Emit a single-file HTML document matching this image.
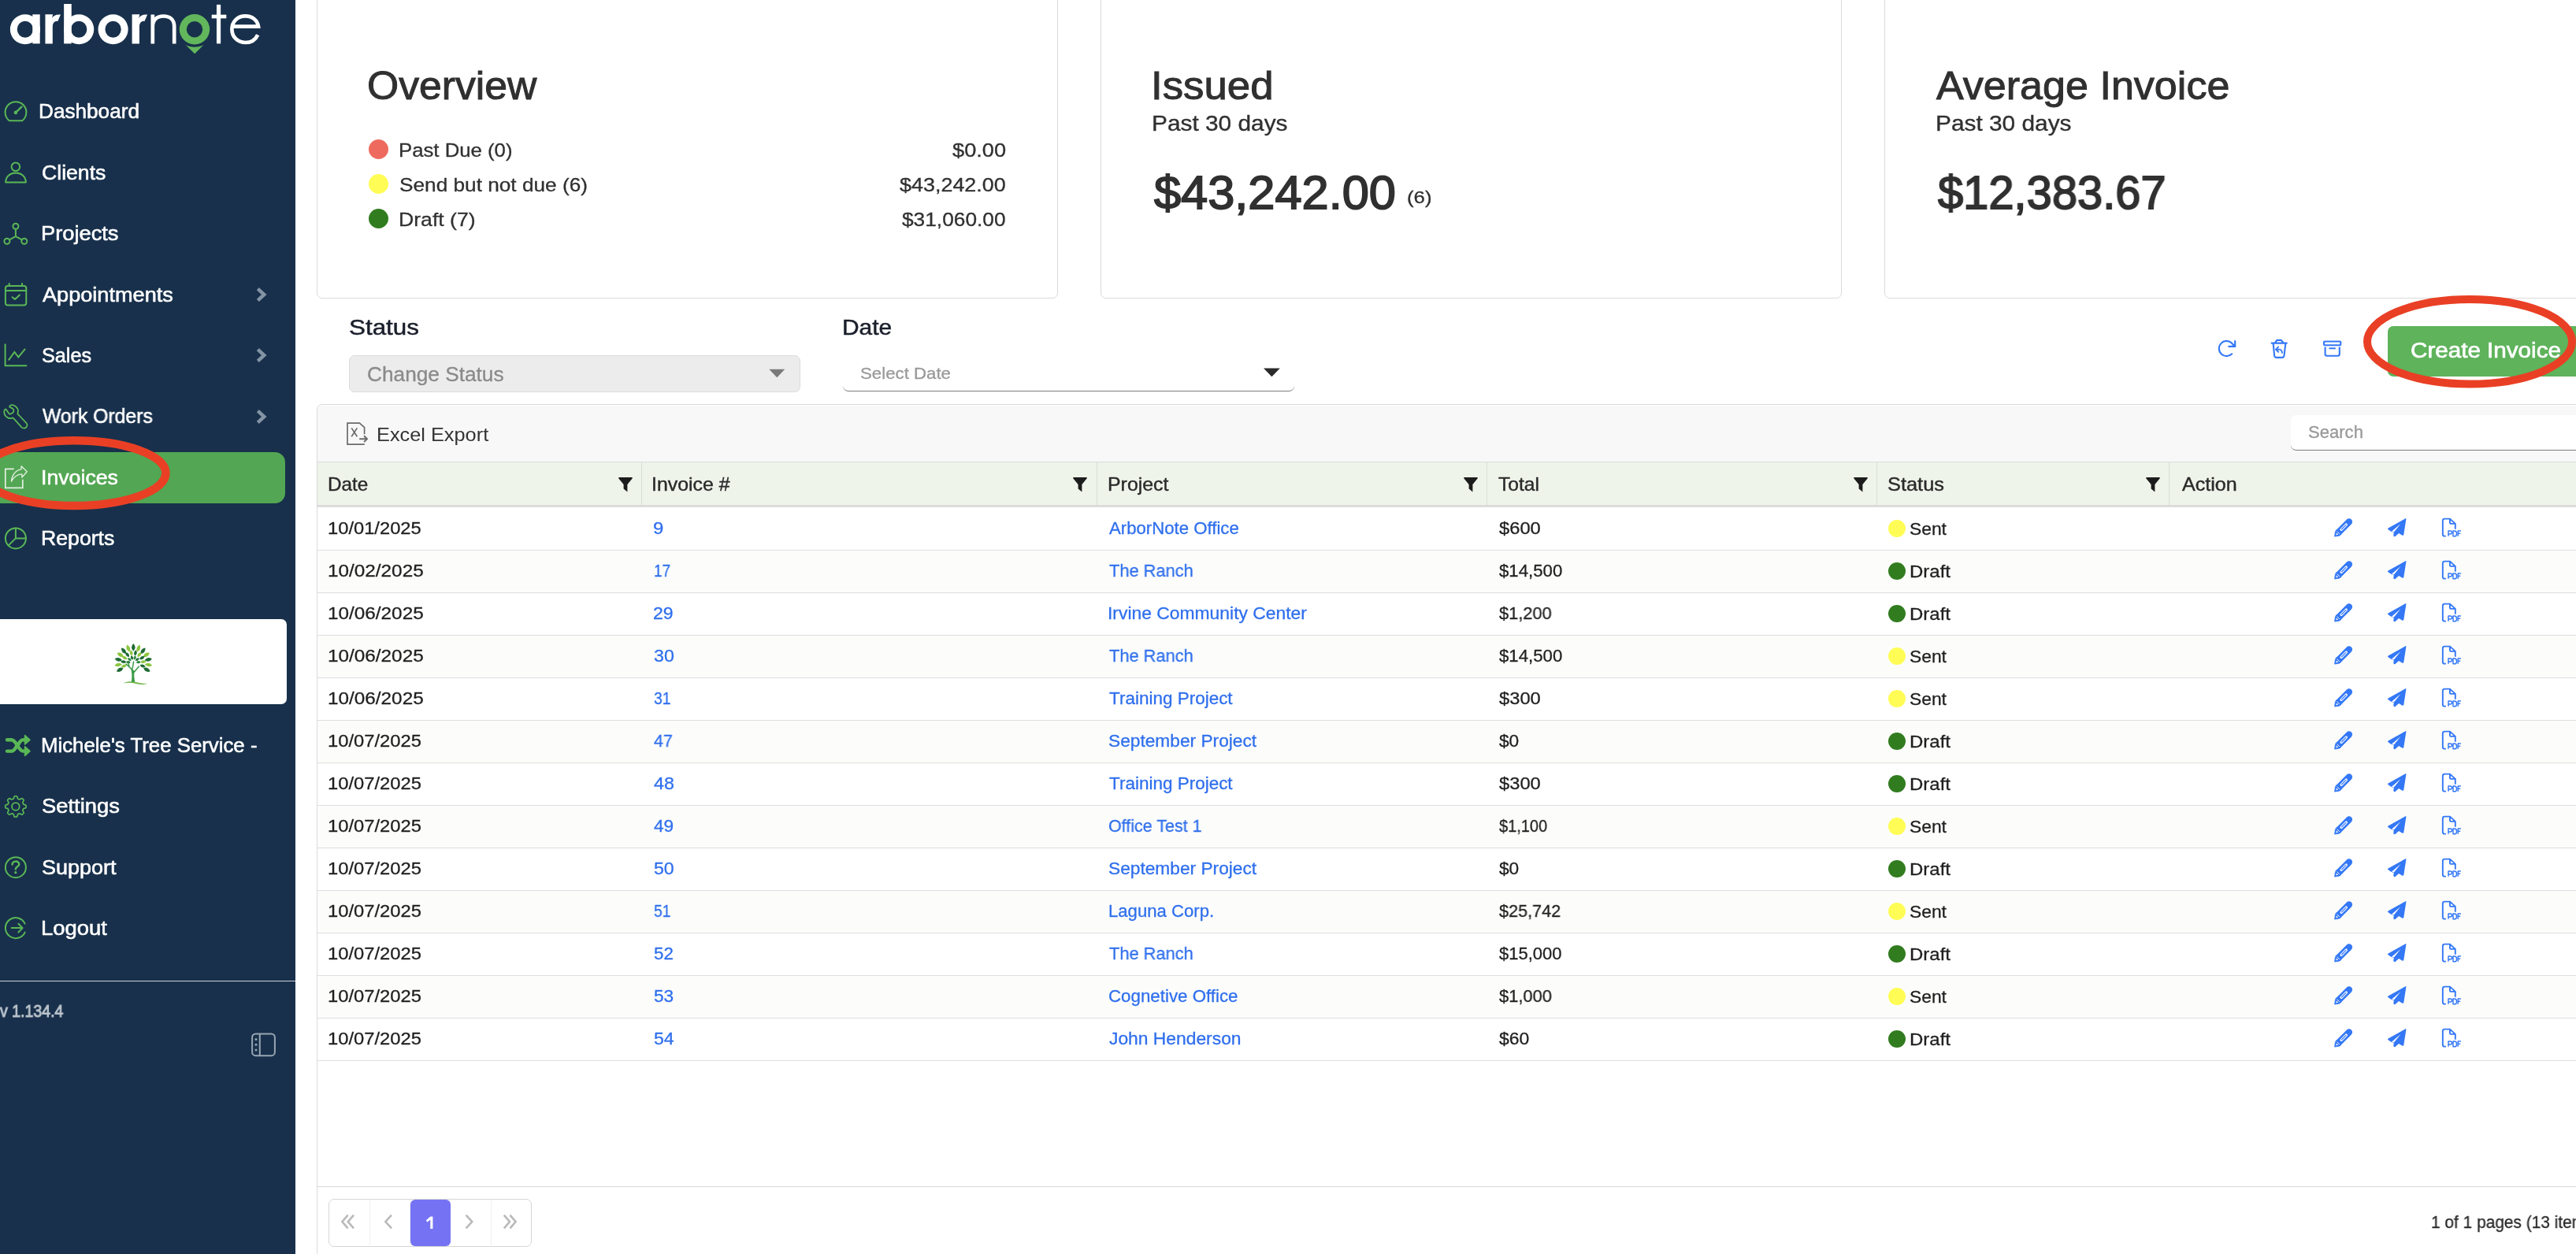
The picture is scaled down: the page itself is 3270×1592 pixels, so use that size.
<!DOCTYPE html>
<html lang="en"><head><meta charset="utf-8"><title>ArborNote - Invoices</title>
<style>
*{box-sizing:border-box}
html,body{margin:0;padding:0}
body{width:3270px;height:1592px;overflow:hidden;background:#fff;font-family:"Liberation Sans",sans-serif;position:relative}
#main,#side{position:absolute;left:0;top:0;height:1592px}
#main{width:3270px;overflow:hidden}
#side{width:375px;background:#18304b;overflow:hidden}
.t{position:absolute;will-change:transform;white-space:pre;line-height:1;transform-origin:0 0;font-family:"Liberation Sans",sans-serif}
.i{position:absolute;overflow:visible}
.dot{position:absolute;border-radius:50%}
.active{position:absolute;left:-14px;top:574px;width:376px;height:65px;border-radius:13px;background:#53a653}
.cobox{position:absolute;left:-10px;top:785.6px;width:374px;height:108.5px;border-radius:7px;background:#fff}
.sdiv{position:absolute;left:0;top:1245px;width:375px;height:1.4px;background:#cdd3da}
.card{position:absolute;top:-20px;width:941px;height:398.5px;border:1.3px solid #dadada;border-radius:7px;background:#fff}
.sel{position:absolute;left:443px;top:451px;width:573px;height:46.6px;background:#ececec;border:1.3px solid #dcdcdc;border-radius:7px}
.datesel{position:absolute;left:1070.2px;top:451px;width:572.6px;height:46px;border-bottom:1.6px solid #7d7d7d;border-radius:7px}
.btn{position:absolute;left:3031px;top:414.2px;width:300px;height:63.4px;border-radius:7px;background:#5eb35b}
.grid{position:absolute;left:402px;top:513.2px;width:2950px;height:1100px;border:1.3px solid #dadada;border-radius:7px;background:#fff}
.toolbar{position:absolute;left:403.3px;top:514.5px;width:2900px;height:72px;background:#f8f8f8;border-bottom:1.3px solid #dcdcdc;border-radius:6px 0 0 0}
.search{position:absolute;left:2908px;top:527px;width:420px;height:45.4px;background:#fff;border-radius:7px;border-bottom:1.6px solid #7d7d7d}
.ghead{position:absolute;left:403.3px;top:586.5px;width:2900px;height:57.8px;background:#eff4ea;border-bottom:3.5px solid #dcdcdc}
.hsep{position:absolute;top:586.5px;width:1.3px;height:54.3px;background:#dadfd5}
.row{position:absolute;left:403.3px;width:2900px;height:54px;border-bottom:1.3px solid #dedede;background:#fff}
.row.alt{background:#fcfdfb}
.gfoot{position:absolute;left:403.3px;top:1505.6px;width:2900px;height:1.3px;background:#d9d9d9}
.pager{position:absolute;left:417.2px;top:1522.2px;width:257.6px;height:60.6px;border:1.3px solid #d6d6d6;border-radius:7px;background:#fff}
.pager i{position:absolute;top:0;width:1px;height:58px;background:#f1f1f1}
.pgact{position:absolute;left:521px;top:1522.9px;width:51.2px;height:59.4px;border-radius:6px;background:#7573f3}
</style></head><body>
<div id="main">
<div class="card" style="left:402px"></div>
<div class="card" style="left:1397px"></div>
<div class="card" style="left:2392px"></div>
<div class="dot" style="left:467.8px;top:176.9px;width:25.2px;height:25.2px;background:#ef6a5e"></div>
<div class="dot" style="left:467.8px;top:221.1px;width:25.2px;height:25.2px;background:#fffd55"></div>
<div class="dot" style="left:467.8px;top:265.0px;width:25.2px;height:25.2px;background:#317c1f"></div>
<div class="sel"></div>
<svg class="i" style="left:975px;top:467px" width="23" height="14" viewBox="975 467 23 14" ><path d="M976.3 468.7H996.3L986.3 479.3Z" fill="#7a7a7a"/></svg>
<div class="datesel"></div>
<svg class="i" style="left:1603px;top:466px" width="23" height="14" viewBox="1603 466 23 14" ><path d="M1604 467.5H1624.8L1614.4 478.3Z" fill="#2a2a2a"/></svg>
<svg class="i" style="left:2814px;top:430px" width="26" height="26" viewBox="2814 430 26 26" ><path d="M2833.2 449.3A9.6 9.6 0 1 1 2832.6 435.15L2837.2 439.9M2837.2 433V439.9H2829.3" fill="none" stroke="#3478f6" stroke-width="2.2" stroke-linecap="round" stroke-linejoin="round"/></svg>
<svg class="i" style="left:2881px;top:428px" width="25" height="29" viewBox="2881 428 25 29" ><path d="M2883.6 435.6H2902.8M2888.1 435.2L2890.3 431.9H2895.9L2898.4 435.2M2885.7 436.2L2887.1 451.4Q2887.4 453.9 2889.7 453.9H2896.9Q2899.2 453.9 2899.5 451.4L2901.3 436.2" fill="none" stroke="#3478f6" stroke-width="2.1" stroke-linecap="round" stroke-linejoin="round"/><path d="M2892.2 440.4L2888.9 443.6L2892.2 446.8M2889.2 443.6H2893.4Q2896.6 443.8 2897 447.8" fill="none" stroke="#3478f6" stroke-width="1.9" stroke-linecap="round" stroke-linejoin="round"/></svg>
<svg class="i" style="left:2947px;top:430px" width="28" height="25" viewBox="2947 430 28 25" ><rect x="2950" y="433.5" width="21.3" height="4.8" rx="1" fill="none" stroke="#3478f6" stroke-width="2.1" stroke-linecap="round" stroke-linejoin="round"/><path d="M2951.6 441.2V449.5Q2951.6 451.7 2953.8 451.7H2967.6Q2969.8 451.7 2969.8 449.5V441.2M2957.4 442.3H2964" fill="none" stroke="#3478f6" stroke-width="2.1" stroke-linecap="round" stroke-linejoin="round"/></svg>
<div class="btn"></div>
<div class="grid"></div>
<div class="toolbar"></div>
<svg class="i" style="left:438px;top:534px" width="30" height="32" viewBox="438 534 30 32" ><path d="M462.6 551.2V542.6L456.4 537.1H441V564.1H462.8" fill="none" stroke="#6b6b6b" stroke-width="1.7" stroke-linejoin="miter"/><path d="M446.2 543.4L453.4 554.3M453.4 543.4L446.2 554.3" stroke="#6b6b6b" stroke-width="1.7" fill="none"/><path d="M456.2 557.2H465M462.1 553.3L466 557.2L462.1 561.1" stroke="#6b6b6b" stroke-width="2" fill="none"/></svg>
<div class="search"></div>
<div class="ghead"></div>
<div class="hsep" style="left:814.0px"></div>
<div class="hsep" style="left:1391.8px"></div>
<div class="hsep" style="left:1887.0px"></div>
<div class="hsep" style="left:2382.0px"></div>
<div class="hsep" style="left:2753.0px"></div>
<svg class="i" style="left:784px;top:604.75px" width="21" height="21" viewBox="784 604.75 21 21" ><path d="M785.8 605.75H802.2Q803.4 605.75 802.6 607.35L796.4 614.75V624.25L791.6 620.35V614.75L785.4 607.35Q784.6 605.75 785.8 605.75Z" fill="#1c1c1c"/></svg>
<svg class="i" style="left:1361.25px;top:604.75px" width="21" height="21" viewBox="1361.25 604.75 21 21" ><path d="M1363.05 605.75H1379.45Q1380.65 605.75 1379.85 607.35L1373.65 614.75V624.25L1368.85 620.35V614.75L1362.65 607.35Q1361.85 605.75 1363.05 605.75Z" fill="#1c1c1c"/></svg>
<svg class="i" style="left:1856.5px;top:604.75px" width="21" height="21" viewBox="1856.5 604.75 21 21" ><path d="M1858.3 605.75H1874.7Q1875.9 605.75 1875.1 607.35L1868.9 614.75V624.25L1864.1 620.35V614.75L1857.9 607.35Q1857.1 605.75 1858.3 605.75Z" fill="#1c1c1c"/></svg>
<svg class="i" style="left:2351.5px;top:604.75px" width="21" height="21" viewBox="2351.5 604.75 21 21" ><path d="M2353.3 605.75H2369.7Q2370.9 605.75 2370.1 607.35L2363.9 614.75V624.25L2359.1 620.35V614.75L2352.9 607.35Q2352.1 605.75 2353.3 605.75Z" fill="#1c1c1c"/></svg>
<svg class="i" style="left:2723px;top:604.75px" width="21" height="21" viewBox="2723 604.75 21 21" ><path d="M2724.8 605.75H2741.2Q2742.4 605.75 2741.6 607.35L2735.4 614.75V624.25L2730.6 620.35V614.75L2724.4 607.35Q2723.6 605.75 2724.8 605.75Z" fill="#1c1c1c"/></svg>
<div class="row" style="top:644.90px"></div>
<div class="dot" style="left:2397px;top:659.85px;width:21.8px;height:21.8px;background:#fffd55"></div>
<svg class="i" style="left:2960.8px;top:655.8px" width="28" height="28" viewBox="2960.8 655.8 28 28" ><path d="M2981.7000000000003 662.3L2969.0 675.0" stroke="#3478f6" stroke-width="8.4" stroke-linecap="round" fill="none"/><path d="M2965.5 672.5L2971.5 678.5L2969.0 680.0L2963.4 680.9L2964.2000000000003 675.1999999999999Z" fill="#3478f6" stroke="#3478f6" stroke-width="0.8" stroke-linejoin="round"/><path d="M2978.1000000000004 665.9L2971.9 672.0999999999999" stroke="#fff" stroke-width="3.3" stroke-linecap="round"/><path d="M2977.8 666.1999999999999L2972.2000000000003 671.8" stroke="#3478f6" stroke-width="1.15" stroke-linecap="round"/><path d="M2966.4 674.4L2969.7000000000003 677.6999999999999" stroke="#fff" stroke-width="0.9"/><path d="M2965.8 676.1999999999999L2968.0 678.4L2965.2000000000003 679.0999999999999Z" fill="#fff"/></svg>
<svg class="i" style="left:3028.9px;top:655.8px" width="28" height="28" viewBox="3028.9 655.8 28 28" ><path d="M3053.48 657.96Q3054.46 657.64 3054.30 658.78L3051.20 678.51Q3050.88 679.98 3049.57 679.49L3045.01 676.88L3040.44 680.79Q3038.48 681.44 3038.16 679.65L3038.65 675.74L3035.06 674.60L3031.47 671.99Q3030.49 671.01 3031.47 670.36Z" fill="#3478f6"/><path d="M3047.29 664.81L3035.87 674.43L3038.81 675.41Z" fill="#fff"/></svg>
<svg class="i" style="left:3097.8px;top:655.8px" width="30" height="28" viewBox="3097.8 655.8 30 28" ><path d="M3104.69 680.47L3103.06 680.47Q3100.62 680.47 3100.62 678.02L3100.62 660.90Q3100.62 658.45 3103.06 658.45L3109.75 658.45L3116.60 664.65L3116.60 671.50M3109.75 658.45L3109.75 663.51Q3109.75 664.65 3110.89 664.65L3116.60 664.65" fill="none" stroke="#3478f6" stroke-width="1.9" stroke-linejoin="round"/><path d="M3107.79 680.63v-6.9h2.3q2.2 0 2.2 2.05q0 2.05 -2.2 2.05h-2.3M3113.79 673.73v6.9h1.7q2.8 0 2.8 -3.45q0 -3.45 -2.8 -3.45zM3119.99 680.63v-6.9h3.7M3119.99 677.13h3" fill="none" stroke="#3478f6" stroke-width="1.45" stroke-linejoin="round"/></svg>
<div class="row alt" style="top:698.90px"></div>
<div class="dot" style="left:2397px;top:713.85px;width:21.8px;height:21.8px;background:#317c1f"></div>
<svg class="i" style="left:2960.8px;top:709.8px" width="28" height="28" viewBox="2960.8 709.8 28 28" ><path d="M2981.7000000000003 716.3L2969.0 729.0" stroke="#3478f6" stroke-width="8.4" stroke-linecap="round" fill="none"/><path d="M2965.5 726.5L2971.5 732.5L2969.0 734.0L2963.4 734.9L2964.2000000000003 729.1999999999999Z" fill="#3478f6" stroke="#3478f6" stroke-width="0.8" stroke-linejoin="round"/><path d="M2978.1000000000004 719.9L2971.9 726.0999999999999" stroke="#fff" stroke-width="3.3" stroke-linecap="round"/><path d="M2977.8 720.1999999999999L2972.2000000000003 725.8" stroke="#3478f6" stroke-width="1.15" stroke-linecap="round"/><path d="M2966.4 728.4L2969.7000000000003 731.6999999999999" stroke="#fff" stroke-width="0.9"/><path d="M2965.8 730.1999999999999L2968.0 732.4L2965.2000000000003 733.0999999999999Z" fill="#fff"/></svg>
<svg class="i" style="left:3028.9px;top:709.8px" width="28" height="28" viewBox="3028.9 709.8 28 28" ><path d="M3053.48 711.96Q3054.46 711.64 3054.30 712.78L3051.20 732.51Q3050.88 733.98 3049.57 733.49L3045.01 730.88L3040.44 734.79Q3038.48 735.44 3038.16 733.65L3038.65 729.74L3035.06 728.60L3031.47 725.99Q3030.49 725.01 3031.47 724.36Z" fill="#3478f6"/><path d="M3047.29 718.81L3035.87 728.43L3038.81 729.41Z" fill="#fff"/></svg>
<svg class="i" style="left:3097.8px;top:709.8px" width="30" height="28" viewBox="3097.8 709.8 30 28" ><path d="M3104.69 734.47L3103.06 734.47Q3100.62 734.47 3100.62 732.02L3100.62 714.90Q3100.62 712.45 3103.06 712.45L3109.75 712.45L3116.60 718.65L3116.60 725.50M3109.75 712.45L3109.75 717.51Q3109.75 718.65 3110.89 718.65L3116.60 718.65" fill="none" stroke="#3478f6" stroke-width="1.9" stroke-linejoin="round"/><path d="M3107.79 734.63v-6.9h2.3q2.2 0 2.2 2.05q0 2.05 -2.2 2.05h-2.3M3113.79 727.73v6.9h1.7q2.8 0 2.8 -3.45q0 -3.45 -2.8 -3.45zM3119.99 734.63v-6.9h3.7M3119.99 731.13h3" fill="none" stroke="#3478f6" stroke-width="1.45" stroke-linejoin="round"/></svg>
<div class="row" style="top:752.90px"></div>
<div class="dot" style="left:2397px;top:767.85px;width:21.8px;height:21.8px;background:#317c1f"></div>
<svg class="i" style="left:2960.8px;top:763.8px" width="28" height="28" viewBox="2960.8 763.8 28 28" ><path d="M2981.7000000000003 770.3L2969.0 783.0" stroke="#3478f6" stroke-width="8.4" stroke-linecap="round" fill="none"/><path d="M2965.5 780.5L2971.5 786.5L2969.0 788.0L2963.4 788.9L2964.2000000000003 783.1999999999999Z" fill="#3478f6" stroke="#3478f6" stroke-width="0.8" stroke-linejoin="round"/><path d="M2978.1000000000004 773.9L2971.9 780.0999999999999" stroke="#fff" stroke-width="3.3" stroke-linecap="round"/><path d="M2977.8 774.1999999999999L2972.2000000000003 779.8" stroke="#3478f6" stroke-width="1.15" stroke-linecap="round"/><path d="M2966.4 782.4L2969.7000000000003 785.6999999999999" stroke="#fff" stroke-width="0.9"/><path d="M2965.8 784.1999999999999L2968.0 786.4L2965.2000000000003 787.0999999999999Z" fill="#fff"/></svg>
<svg class="i" style="left:3028.9px;top:763.8px" width="28" height="28" viewBox="3028.9 763.8 28 28" ><path d="M3053.48 765.96Q3054.46 765.64 3054.30 766.78L3051.20 786.51Q3050.88 787.98 3049.57 787.49L3045.01 784.88L3040.44 788.79Q3038.48 789.44 3038.16 787.65L3038.65 783.74L3035.06 782.60L3031.47 779.99Q3030.49 779.01 3031.47 778.36Z" fill="#3478f6"/><path d="M3047.29 772.81L3035.87 782.43L3038.81 783.41Z" fill="#fff"/></svg>
<svg class="i" style="left:3097.8px;top:763.8px" width="30" height="28" viewBox="3097.8 763.8 30 28" ><path d="M3104.69 788.47L3103.06 788.47Q3100.62 788.47 3100.62 786.02L3100.62 768.90Q3100.62 766.45 3103.06 766.45L3109.75 766.45L3116.60 772.65L3116.60 779.50M3109.75 766.45L3109.75 771.51Q3109.75 772.65 3110.89 772.65L3116.60 772.65" fill="none" stroke="#3478f6" stroke-width="1.9" stroke-linejoin="round"/><path d="M3107.79 788.63v-6.9h2.3q2.2 0 2.2 2.05q0 2.05 -2.2 2.05h-2.3M3113.79 781.73v6.9h1.7q2.8 0 2.8 -3.45q0 -3.45 -2.8 -3.45zM3119.99 788.63v-6.9h3.7M3119.99 785.13h3" fill="none" stroke="#3478f6" stroke-width="1.45" stroke-linejoin="round"/></svg>
<div class="row alt" style="top:806.90px"></div>
<div class="dot" style="left:2397px;top:821.85px;width:21.8px;height:21.8px;background:#fffd55"></div>
<svg class="i" style="left:2960.8px;top:817.8px" width="28" height="28" viewBox="2960.8 817.8 28 28" ><path d="M2981.7000000000003 824.3L2969.0 837.0" stroke="#3478f6" stroke-width="8.4" stroke-linecap="round" fill="none"/><path d="M2965.5 834.5L2971.5 840.5L2969.0 842.0L2963.4 842.9L2964.2000000000003 837.1999999999999Z" fill="#3478f6" stroke="#3478f6" stroke-width="0.8" stroke-linejoin="round"/><path d="M2978.1000000000004 827.9L2971.9 834.0999999999999" stroke="#fff" stroke-width="3.3" stroke-linecap="round"/><path d="M2977.8 828.1999999999999L2972.2000000000003 833.8" stroke="#3478f6" stroke-width="1.15" stroke-linecap="round"/><path d="M2966.4 836.4L2969.7000000000003 839.6999999999999" stroke="#fff" stroke-width="0.9"/><path d="M2965.8 838.1999999999999L2968.0 840.4L2965.2000000000003 841.0999999999999Z" fill="#fff"/></svg>
<svg class="i" style="left:3028.9px;top:817.8px" width="28" height="28" viewBox="3028.9 817.8 28 28" ><path d="M3053.48 819.96Q3054.46 819.64 3054.30 820.78L3051.20 840.51Q3050.88 841.98 3049.57 841.49L3045.01 838.88L3040.44 842.79Q3038.48 843.44 3038.16 841.65L3038.65 837.74L3035.06 836.60L3031.47 833.99Q3030.49 833.01 3031.47 832.36Z" fill="#3478f6"/><path d="M3047.29 826.81L3035.87 836.43L3038.81 837.41Z" fill="#fff"/></svg>
<svg class="i" style="left:3097.8px;top:817.8px" width="30" height="28" viewBox="3097.8 817.8 30 28" ><path d="M3104.69 842.47L3103.06 842.47Q3100.62 842.47 3100.62 840.02L3100.62 822.90Q3100.62 820.45 3103.06 820.45L3109.75 820.45L3116.60 826.65L3116.60 833.50M3109.75 820.45L3109.75 825.51Q3109.75 826.65 3110.89 826.65L3116.60 826.65" fill="none" stroke="#3478f6" stroke-width="1.9" stroke-linejoin="round"/><path d="M3107.79 842.63v-6.9h2.3q2.2 0 2.2 2.05q0 2.05 -2.2 2.05h-2.3M3113.79 835.73v6.9h1.7q2.8 0 2.8 -3.45q0 -3.45 -2.8 -3.45zM3119.99 842.63v-6.9h3.7M3119.99 839.13h3" fill="none" stroke="#3478f6" stroke-width="1.45" stroke-linejoin="round"/></svg>
<div class="row" style="top:860.90px"></div>
<div class="dot" style="left:2397px;top:875.85px;width:21.8px;height:21.8px;background:#fffd55"></div>
<svg class="i" style="left:2960.8px;top:871.8px" width="28" height="28" viewBox="2960.8 871.8 28 28" ><path d="M2981.7000000000003 878.3L2969.0 891.0" stroke="#3478f6" stroke-width="8.4" stroke-linecap="round" fill="none"/><path d="M2965.5 888.5L2971.5 894.5L2969.0 896.0L2963.4 896.9L2964.2000000000003 891.1999999999999Z" fill="#3478f6" stroke="#3478f6" stroke-width="0.8" stroke-linejoin="round"/><path d="M2978.1000000000004 881.9L2971.9 888.0999999999999" stroke="#fff" stroke-width="3.3" stroke-linecap="round"/><path d="M2977.8 882.1999999999999L2972.2000000000003 887.8" stroke="#3478f6" stroke-width="1.15" stroke-linecap="round"/><path d="M2966.4 890.4L2969.7000000000003 893.6999999999999" stroke="#fff" stroke-width="0.9"/><path d="M2965.8 892.1999999999999L2968.0 894.4L2965.2000000000003 895.0999999999999Z" fill="#fff"/></svg>
<svg class="i" style="left:3028.9px;top:871.8px" width="28" height="28" viewBox="3028.9 871.8 28 28" ><path d="M3053.48 873.96Q3054.46 873.64 3054.30 874.78L3051.20 894.51Q3050.88 895.98 3049.57 895.49L3045.01 892.88L3040.44 896.79Q3038.48 897.44 3038.16 895.65L3038.65 891.74L3035.06 890.60L3031.47 887.99Q3030.49 887.01 3031.47 886.36Z" fill="#3478f6"/><path d="M3047.29 880.81L3035.87 890.43L3038.81 891.41Z" fill="#fff"/></svg>
<svg class="i" style="left:3097.8px;top:871.8px" width="30" height="28" viewBox="3097.8 871.8 30 28" ><path d="M3104.69 896.47L3103.06 896.47Q3100.62 896.47 3100.62 894.02L3100.62 876.90Q3100.62 874.45 3103.06 874.45L3109.75 874.45L3116.60 880.65L3116.60 887.50M3109.75 874.45L3109.75 879.51Q3109.75 880.65 3110.89 880.65L3116.60 880.65" fill="none" stroke="#3478f6" stroke-width="1.9" stroke-linejoin="round"/><path d="M3107.79 896.63v-6.9h2.3q2.2 0 2.2 2.05q0 2.05 -2.2 2.05h-2.3M3113.79 889.73v6.9h1.7q2.8 0 2.8 -3.45q0 -3.45 -2.8 -3.45zM3119.99 896.63v-6.9h3.7M3119.99 893.13h3" fill="none" stroke="#3478f6" stroke-width="1.45" stroke-linejoin="round"/></svg>
<div class="row alt" style="top:914.90px"></div>
<div class="dot" style="left:2397px;top:929.85px;width:21.8px;height:21.8px;background:#317c1f"></div>
<svg class="i" style="left:2960.8px;top:925.8px" width="28" height="28" viewBox="2960.8 925.8 28 28" ><path d="M2981.7000000000003 932.3L2969.0 945.0" stroke="#3478f6" stroke-width="8.4" stroke-linecap="round" fill="none"/><path d="M2965.5 942.5L2971.5 948.5L2969.0 950.0L2963.4 950.9L2964.2000000000003 945.1999999999999Z" fill="#3478f6" stroke="#3478f6" stroke-width="0.8" stroke-linejoin="round"/><path d="M2978.1000000000004 935.9L2971.9 942.0999999999999" stroke="#fff" stroke-width="3.3" stroke-linecap="round"/><path d="M2977.8 936.1999999999999L2972.2000000000003 941.8" stroke="#3478f6" stroke-width="1.15" stroke-linecap="round"/><path d="M2966.4 944.4L2969.7000000000003 947.6999999999999" stroke="#fff" stroke-width="0.9"/><path d="M2965.8 946.1999999999999L2968.0 948.4L2965.2000000000003 949.0999999999999Z" fill="#fff"/></svg>
<svg class="i" style="left:3028.9px;top:925.8px" width="28" height="28" viewBox="3028.9 925.8 28 28" ><path d="M3053.48 927.96Q3054.46 927.64 3054.30 928.78L3051.20 948.51Q3050.88 949.98 3049.57 949.49L3045.01 946.88L3040.44 950.79Q3038.48 951.44 3038.16 949.65L3038.65 945.74L3035.06 944.60L3031.47 941.99Q3030.49 941.01 3031.47 940.36Z" fill="#3478f6"/><path d="M3047.29 934.81L3035.87 944.43L3038.81 945.41Z" fill="#fff"/></svg>
<svg class="i" style="left:3097.8px;top:925.8px" width="30" height="28" viewBox="3097.8 925.8 30 28" ><path d="M3104.69 950.47L3103.06 950.47Q3100.62 950.47 3100.62 948.02L3100.62 930.90Q3100.62 928.45 3103.06 928.45L3109.75 928.45L3116.60 934.65L3116.60 941.50M3109.75 928.45L3109.75 933.51Q3109.75 934.65 3110.89 934.65L3116.60 934.65" fill="none" stroke="#3478f6" stroke-width="1.9" stroke-linejoin="round"/><path d="M3107.79 950.63v-6.9h2.3q2.2 0 2.2 2.05q0 2.05 -2.2 2.05h-2.3M3113.79 943.73v6.9h1.7q2.8 0 2.8 -3.45q0 -3.45 -2.8 -3.45zM3119.99 950.63v-6.9h3.7M3119.99 947.13h3" fill="none" stroke="#3478f6" stroke-width="1.45" stroke-linejoin="round"/></svg>
<div class="row" style="top:968.90px"></div>
<div class="dot" style="left:2397px;top:983.85px;width:21.8px;height:21.8px;background:#317c1f"></div>
<svg class="i" style="left:2960.8px;top:979.8px" width="28" height="28" viewBox="2960.8 979.8 28 28" ><path d="M2981.7000000000003 986.3L2969.0 999.0" stroke="#3478f6" stroke-width="8.4" stroke-linecap="round" fill="none"/><path d="M2965.5 996.5L2971.5 1002.5L2969.0 1004.0L2963.4 1004.9L2964.2000000000003 999.1999999999999Z" fill="#3478f6" stroke="#3478f6" stroke-width="0.8" stroke-linejoin="round"/><path d="M2978.1000000000004 989.9L2971.9 996.0999999999999" stroke="#fff" stroke-width="3.3" stroke-linecap="round"/><path d="M2977.8 990.1999999999999L2972.2000000000003 995.8" stroke="#3478f6" stroke-width="1.15" stroke-linecap="round"/><path d="M2966.4 998.4L2969.7000000000003 1001.6999999999999" stroke="#fff" stroke-width="0.9"/><path d="M2965.8 1000.1999999999999L2968.0 1002.4L2965.2000000000003 1003.0999999999999Z" fill="#fff"/></svg>
<svg class="i" style="left:3028.9px;top:979.8px" width="28" height="28" viewBox="3028.9 979.8 28 28" ><path d="M3053.48 981.96Q3054.46 981.64 3054.30 982.78L3051.20 1002.51Q3050.88 1003.98 3049.57 1003.49L3045.01 1000.88L3040.44 1004.79Q3038.48 1005.44 3038.16 1003.65L3038.65 999.74L3035.06 998.60L3031.47 995.99Q3030.49 995.01 3031.47 994.36Z" fill="#3478f6"/><path d="M3047.29 988.81L3035.87 998.43L3038.81 999.41Z" fill="#fff"/></svg>
<svg class="i" style="left:3097.8px;top:979.8px" width="30" height="28" viewBox="3097.8 979.8 30 28" ><path d="M3104.69 1004.47L3103.06 1004.47Q3100.62 1004.47 3100.62 1002.02L3100.62 984.90Q3100.62 982.45 3103.06 982.45L3109.75 982.45L3116.60 988.65L3116.60 995.50M3109.75 982.45L3109.75 987.51Q3109.75 988.65 3110.89 988.65L3116.60 988.65" fill="none" stroke="#3478f6" stroke-width="1.9" stroke-linejoin="round"/><path d="M3107.79 1004.63v-6.9h2.3q2.2 0 2.2 2.05q0 2.05 -2.2 2.05h-2.3M3113.79 997.73v6.9h1.7q2.8 0 2.8 -3.45q0 -3.45 -2.8 -3.45zM3119.99 1004.63v-6.9h3.7M3119.99 1001.13h3" fill="none" stroke="#3478f6" stroke-width="1.45" stroke-linejoin="round"/></svg>
<div class="row alt" style="top:1022.90px"></div>
<div class="dot" style="left:2397px;top:1037.85px;width:21.8px;height:21.8px;background:#fffd55"></div>
<svg class="i" style="left:2960.8px;top:1033.8px" width="28" height="28" viewBox="2960.8 1033.8 28 28" ><path d="M2981.7000000000003 1040.3L2969.0 1053.0" stroke="#3478f6" stroke-width="8.4" stroke-linecap="round" fill="none"/><path d="M2965.5 1050.5L2971.5 1056.5L2969.0 1058.0L2963.4 1058.8999999999999L2964.2000000000003 1053.2Z" fill="#3478f6" stroke="#3478f6" stroke-width="0.8" stroke-linejoin="round"/><path d="M2978.1000000000004 1043.8999999999999L2971.9 1050.1" stroke="#fff" stroke-width="3.3" stroke-linecap="round"/><path d="M2977.8 1044.2L2972.2000000000003 1049.8" stroke="#3478f6" stroke-width="1.15" stroke-linecap="round"/><path d="M2966.4 1052.3999999999999L2969.7000000000003 1055.7" stroke="#fff" stroke-width="0.9"/><path d="M2965.8 1054.2L2968.0 1056.3999999999999L2965.2000000000003 1057.1Z" fill="#fff"/></svg>
<svg class="i" style="left:3028.9px;top:1033.8px" width="28" height="28" viewBox="3028.9 1033.8 28 28" ><path d="M3053.48 1035.96Q3054.46 1035.64 3054.30 1036.78L3051.20 1056.51Q3050.88 1057.98 3049.57 1057.49L3045.01 1054.88L3040.44 1058.79Q3038.48 1059.44 3038.16 1057.65L3038.65 1053.74L3035.06 1052.60L3031.47 1049.99Q3030.49 1049.01 3031.47 1048.36Z" fill="#3478f6"/><path d="M3047.29 1042.81L3035.87 1052.43L3038.81 1053.41Z" fill="#fff"/></svg>
<svg class="i" style="left:3097.8px;top:1033.8px" width="30" height="28" viewBox="3097.8 1033.8 30 28" ><path d="M3104.69 1058.47L3103.06 1058.47Q3100.62 1058.47 3100.62 1056.02L3100.62 1038.90Q3100.62 1036.45 3103.06 1036.45L3109.75 1036.45L3116.60 1042.65L3116.60 1049.50M3109.75 1036.45L3109.75 1041.51Q3109.75 1042.65 3110.89 1042.65L3116.60 1042.65" fill="none" stroke="#3478f6" stroke-width="1.9" stroke-linejoin="round"/><path d="M3107.79 1058.63v-6.9h2.3q2.2 0 2.2 2.05q0 2.05 -2.2 2.05h-2.3M3113.79 1051.73v6.9h1.7q2.8 0 2.8 -3.45q0 -3.45 -2.8 -3.45zM3119.99 1058.63v-6.9h3.7M3119.99 1055.13h3" fill="none" stroke="#3478f6" stroke-width="1.45" stroke-linejoin="round"/></svg>
<div class="row" style="top:1076.90px"></div>
<div class="dot" style="left:2397px;top:1091.85px;width:21.8px;height:21.8px;background:#317c1f"></div>
<svg class="i" style="left:2960.8px;top:1087.8px" width="28" height="28" viewBox="2960.8 1087.8 28 28" ><path d="M2981.7000000000003 1094.3L2969.0 1107.0" stroke="#3478f6" stroke-width="8.4" stroke-linecap="round" fill="none"/><path d="M2965.5 1104.5L2971.5 1110.5L2969.0 1112.0L2963.4 1112.8999999999999L2964.2000000000003 1107.2Z" fill="#3478f6" stroke="#3478f6" stroke-width="0.8" stroke-linejoin="round"/><path d="M2978.1000000000004 1097.8999999999999L2971.9 1104.1" stroke="#fff" stroke-width="3.3" stroke-linecap="round"/><path d="M2977.8 1098.2L2972.2000000000003 1103.8" stroke="#3478f6" stroke-width="1.15" stroke-linecap="round"/><path d="M2966.4 1106.3999999999999L2969.7000000000003 1109.7" stroke="#fff" stroke-width="0.9"/><path d="M2965.8 1108.2L2968.0 1110.3999999999999L2965.2000000000003 1111.1Z" fill="#fff"/></svg>
<svg class="i" style="left:3028.9px;top:1087.8px" width="28" height="28" viewBox="3028.9 1087.8 28 28" ><path d="M3053.48 1089.96Q3054.46 1089.64 3054.30 1090.78L3051.20 1110.51Q3050.88 1111.98 3049.57 1111.49L3045.01 1108.88L3040.44 1112.79Q3038.48 1113.44 3038.16 1111.65L3038.65 1107.74L3035.06 1106.60L3031.47 1103.99Q3030.49 1103.01 3031.47 1102.36Z" fill="#3478f6"/><path d="M3047.29 1096.81L3035.87 1106.43L3038.81 1107.41Z" fill="#fff"/></svg>
<svg class="i" style="left:3097.8px;top:1087.8px" width="30" height="28" viewBox="3097.8 1087.8 30 28" ><path d="M3104.69 1112.47L3103.06 1112.47Q3100.62 1112.47 3100.62 1110.02L3100.62 1092.90Q3100.62 1090.45 3103.06 1090.45L3109.75 1090.45L3116.60 1096.65L3116.60 1103.50M3109.75 1090.45L3109.75 1095.51Q3109.75 1096.65 3110.89 1096.65L3116.60 1096.65" fill="none" stroke="#3478f6" stroke-width="1.9" stroke-linejoin="round"/><path d="M3107.79 1112.63v-6.9h2.3q2.2 0 2.2 2.05q0 2.05 -2.2 2.05h-2.3M3113.79 1105.73v6.9h1.7q2.8 0 2.8 -3.45q0 -3.45 -2.8 -3.45zM3119.99 1112.63v-6.9h3.7M3119.99 1109.13h3" fill="none" stroke="#3478f6" stroke-width="1.45" stroke-linejoin="round"/></svg>
<div class="row alt" style="top:1130.90px"></div>
<div class="dot" style="left:2397px;top:1145.85px;width:21.8px;height:21.8px;background:#fffd55"></div>
<svg class="i" style="left:2960.8px;top:1141.8px" width="28" height="28" viewBox="2960.8 1141.8 28 28" ><path d="M2981.7000000000003 1148.3L2969.0 1161.0" stroke="#3478f6" stroke-width="8.4" stroke-linecap="round" fill="none"/><path d="M2965.5 1158.5L2971.5 1164.5L2969.0 1166.0L2963.4 1166.8999999999999L2964.2000000000003 1161.2Z" fill="#3478f6" stroke="#3478f6" stroke-width="0.8" stroke-linejoin="round"/><path d="M2978.1000000000004 1151.8999999999999L2971.9 1158.1" stroke="#fff" stroke-width="3.3" stroke-linecap="round"/><path d="M2977.8 1152.2L2972.2000000000003 1157.8" stroke="#3478f6" stroke-width="1.15" stroke-linecap="round"/><path d="M2966.4 1160.3999999999999L2969.7000000000003 1163.7" stroke="#fff" stroke-width="0.9"/><path d="M2965.8 1162.2L2968.0 1164.3999999999999L2965.2000000000003 1165.1Z" fill="#fff"/></svg>
<svg class="i" style="left:3028.9px;top:1141.8px" width="28" height="28" viewBox="3028.9 1141.8 28 28" ><path d="M3053.48 1143.96Q3054.46 1143.64 3054.30 1144.78L3051.20 1164.51Q3050.88 1165.98 3049.57 1165.49L3045.01 1162.88L3040.44 1166.79Q3038.48 1167.44 3038.16 1165.65L3038.65 1161.74L3035.06 1160.60L3031.47 1157.99Q3030.49 1157.01 3031.47 1156.36Z" fill="#3478f6"/><path d="M3047.29 1150.81L3035.87 1160.43L3038.81 1161.41Z" fill="#fff"/></svg>
<svg class="i" style="left:3097.8px;top:1141.8px" width="30" height="28" viewBox="3097.8 1141.8 30 28" ><path d="M3104.69 1166.47L3103.06 1166.47Q3100.62 1166.47 3100.62 1164.02L3100.62 1146.90Q3100.62 1144.45 3103.06 1144.45L3109.75 1144.45L3116.60 1150.65L3116.60 1157.50M3109.75 1144.45L3109.75 1149.51Q3109.75 1150.65 3110.89 1150.65L3116.60 1150.65" fill="none" stroke="#3478f6" stroke-width="1.9" stroke-linejoin="round"/><path d="M3107.79 1166.63v-6.9h2.3q2.2 0 2.2 2.05q0 2.05 -2.2 2.05h-2.3M3113.79 1159.73v6.9h1.7q2.8 0 2.8 -3.45q0 -3.45 -2.8 -3.45zM3119.99 1166.63v-6.9h3.7M3119.99 1163.13h3" fill="none" stroke="#3478f6" stroke-width="1.45" stroke-linejoin="round"/></svg>
<div class="row" style="top:1184.90px"></div>
<div class="dot" style="left:2397px;top:1199.85px;width:21.8px;height:21.8px;background:#317c1f"></div>
<svg class="i" style="left:2960.8px;top:1195.8px" width="28" height="28" viewBox="2960.8 1195.8 28 28" ><path d="M2981.7000000000003 1202.3L2969.0 1215.0" stroke="#3478f6" stroke-width="8.4" stroke-linecap="round" fill="none"/><path d="M2965.5 1212.5L2971.5 1218.5L2969.0 1220.0L2963.4 1220.8999999999999L2964.2000000000003 1215.2Z" fill="#3478f6" stroke="#3478f6" stroke-width="0.8" stroke-linejoin="round"/><path d="M2978.1000000000004 1205.8999999999999L2971.9 1212.1" stroke="#fff" stroke-width="3.3" stroke-linecap="round"/><path d="M2977.8 1206.2L2972.2000000000003 1211.8" stroke="#3478f6" stroke-width="1.15" stroke-linecap="round"/><path d="M2966.4 1214.3999999999999L2969.7000000000003 1217.7" stroke="#fff" stroke-width="0.9"/><path d="M2965.8 1216.2L2968.0 1218.3999999999999L2965.2000000000003 1219.1Z" fill="#fff"/></svg>
<svg class="i" style="left:3028.9px;top:1195.8px" width="28" height="28" viewBox="3028.9 1195.8 28 28" ><path d="M3053.48 1197.96Q3054.46 1197.64 3054.30 1198.78L3051.20 1218.51Q3050.88 1219.98 3049.57 1219.49L3045.01 1216.88L3040.44 1220.79Q3038.48 1221.44 3038.16 1219.65L3038.65 1215.74L3035.06 1214.60L3031.47 1211.99Q3030.49 1211.01 3031.47 1210.36Z" fill="#3478f6"/><path d="M3047.29 1204.81L3035.87 1214.43L3038.81 1215.41Z" fill="#fff"/></svg>
<svg class="i" style="left:3097.8px;top:1195.8px" width="30" height="28" viewBox="3097.8 1195.8 30 28" ><path d="M3104.69 1220.47L3103.06 1220.47Q3100.62 1220.47 3100.62 1218.02L3100.62 1200.90Q3100.62 1198.45 3103.06 1198.45L3109.75 1198.45L3116.60 1204.65L3116.60 1211.50M3109.75 1198.45L3109.75 1203.51Q3109.75 1204.65 3110.89 1204.65L3116.60 1204.65" fill="none" stroke="#3478f6" stroke-width="1.9" stroke-linejoin="round"/><path d="M3107.79 1220.63v-6.9h2.3q2.2 0 2.2 2.05q0 2.05 -2.2 2.05h-2.3M3113.79 1213.73v6.9h1.7q2.8 0 2.8 -3.45q0 -3.45 -2.8 -3.45zM3119.99 1220.63v-6.9h3.7M3119.99 1217.13h3" fill="none" stroke="#3478f6" stroke-width="1.45" stroke-linejoin="round"/></svg>
<div class="row alt" style="top:1238.90px"></div>
<div class="dot" style="left:2397px;top:1253.85px;width:21.8px;height:21.8px;background:#fffd55"></div>
<svg class="i" style="left:2960.8px;top:1249.8px" width="28" height="28" viewBox="2960.8 1249.8 28 28" ><path d="M2981.7000000000003 1256.3L2969.0 1269.0" stroke="#3478f6" stroke-width="8.4" stroke-linecap="round" fill="none"/><path d="M2965.5 1266.5L2971.5 1272.5L2969.0 1274.0L2963.4 1274.8999999999999L2964.2000000000003 1269.2Z" fill="#3478f6" stroke="#3478f6" stroke-width="0.8" stroke-linejoin="round"/><path d="M2978.1000000000004 1259.8999999999999L2971.9 1266.1" stroke="#fff" stroke-width="3.3" stroke-linecap="round"/><path d="M2977.8 1260.2L2972.2000000000003 1265.8" stroke="#3478f6" stroke-width="1.15" stroke-linecap="round"/><path d="M2966.4 1268.3999999999999L2969.7000000000003 1271.7" stroke="#fff" stroke-width="0.9"/><path d="M2965.8 1270.2L2968.0 1272.3999999999999L2965.2000000000003 1273.1Z" fill="#fff"/></svg>
<svg class="i" style="left:3028.9px;top:1249.8px" width="28" height="28" viewBox="3028.9 1249.8 28 28" ><path d="M3053.48 1251.96Q3054.46 1251.64 3054.30 1252.78L3051.20 1272.51Q3050.88 1273.98 3049.57 1273.49L3045.01 1270.88L3040.44 1274.79Q3038.48 1275.44 3038.16 1273.65L3038.65 1269.74L3035.06 1268.60L3031.47 1265.99Q3030.49 1265.01 3031.47 1264.36Z" fill="#3478f6"/><path d="M3047.29 1258.81L3035.87 1268.43L3038.81 1269.41Z" fill="#fff"/></svg>
<svg class="i" style="left:3097.8px;top:1249.8px" width="30" height="28" viewBox="3097.8 1249.8 30 28" ><path d="M3104.69 1274.47L3103.06 1274.47Q3100.62 1274.47 3100.62 1272.02L3100.62 1254.90Q3100.62 1252.45 3103.06 1252.45L3109.75 1252.45L3116.60 1258.65L3116.60 1265.50M3109.75 1252.45L3109.75 1257.51Q3109.75 1258.65 3110.89 1258.65L3116.60 1258.65" fill="none" stroke="#3478f6" stroke-width="1.9" stroke-linejoin="round"/><path d="M3107.79 1274.63v-6.9h2.3q2.2 0 2.2 2.05q0 2.05 -2.2 2.05h-2.3M3113.79 1267.73v6.9h1.7q2.8 0 2.8 -3.45q0 -3.45 -2.8 -3.45zM3119.99 1274.63v-6.9h3.7M3119.99 1271.13h3" fill="none" stroke="#3478f6" stroke-width="1.45" stroke-linejoin="round"/></svg>
<div class="row" style="top:1292.90px"></div>
<div class="dot" style="left:2397px;top:1307.85px;width:21.8px;height:21.8px;background:#317c1f"></div>
<svg class="i" style="left:2960.8px;top:1303.8px" width="28" height="28" viewBox="2960.8 1303.8 28 28" ><path d="M2981.7000000000003 1310.3L2969.0 1323.0" stroke="#3478f6" stroke-width="8.4" stroke-linecap="round" fill="none"/><path d="M2965.5 1320.5L2971.5 1326.5L2969.0 1328.0L2963.4 1328.8999999999999L2964.2000000000003 1323.2Z" fill="#3478f6" stroke="#3478f6" stroke-width="0.8" stroke-linejoin="round"/><path d="M2978.1000000000004 1313.8999999999999L2971.9 1320.1" stroke="#fff" stroke-width="3.3" stroke-linecap="round"/><path d="M2977.8 1314.2L2972.2000000000003 1319.8" stroke="#3478f6" stroke-width="1.15" stroke-linecap="round"/><path d="M2966.4 1322.3999999999999L2969.7000000000003 1325.7" stroke="#fff" stroke-width="0.9"/><path d="M2965.8 1324.2L2968.0 1326.3999999999999L2965.2000000000003 1327.1Z" fill="#fff"/></svg>
<svg class="i" style="left:3028.9px;top:1303.8px" width="28" height="28" viewBox="3028.9 1303.8 28 28" ><path d="M3053.48 1305.96Q3054.46 1305.64 3054.30 1306.78L3051.20 1326.51Q3050.88 1327.98 3049.57 1327.49L3045.01 1324.88L3040.44 1328.79Q3038.48 1329.44 3038.16 1327.65L3038.65 1323.74L3035.06 1322.60L3031.47 1319.99Q3030.49 1319.01 3031.47 1318.36Z" fill="#3478f6"/><path d="M3047.29 1312.81L3035.87 1322.43L3038.81 1323.41Z" fill="#fff"/></svg>
<svg class="i" style="left:3097.8px;top:1303.8px" width="30" height="28" viewBox="3097.8 1303.8 30 28" ><path d="M3104.69 1328.47L3103.06 1328.47Q3100.62 1328.47 3100.62 1326.02L3100.62 1308.90Q3100.62 1306.45 3103.06 1306.45L3109.75 1306.45L3116.60 1312.65L3116.60 1319.50M3109.75 1306.45L3109.75 1311.51Q3109.75 1312.65 3110.89 1312.65L3116.60 1312.65" fill="none" stroke="#3478f6" stroke-width="1.9" stroke-linejoin="round"/><path d="M3107.79 1328.63v-6.9h2.3q2.2 0 2.2 2.05q0 2.05 -2.2 2.05h-2.3M3113.79 1321.73v6.9h1.7q2.8 0 2.8 -3.45q0 -3.45 -2.8 -3.45zM3119.99 1328.63v-6.9h3.7M3119.99 1325.13h3" fill="none" stroke="#3478f6" stroke-width="1.45" stroke-linejoin="round"/></svg>
<div class="gfoot"></div>
<div class="pager"><i style="left:50.4px"></i><i style="left:101.9px"></i><i style="left:204.9px"></i></div>
<div class="pgact"></div>
<svg class="i" style="left:538px;top:1542px" width="14" height="20" viewBox="538 1542 14 20" ><path d="M546.3 1544.4H549.4V1560H546.3V1548.4L542.3 1551.6L540.9 1549.2Z" fill="#fff"/></svg>
<svg class="i" style="left:420px;top:1535px" width="250" height="32" viewBox="420 1535 250 32" ><path d="M441.6 1542.6L434.4 1551L441.6 1559.4M449 1542.6L441.8 1551L449 1559.4" fill="none" stroke="#b9b9b9" stroke-width="2.6"/><path d="M497 1542.6L489.4 1551L497 1559.4" fill="none" stroke="#b9b9b9" stroke-width="2.6"/><path d="M591.6 1542.6L599.2 1551L591.6 1559.4" fill="none" stroke="#b9b9b9" stroke-width="2.6"/><path d="M639.8 1542.6L647 1551L639.8 1559.4M647.4 1542.6L654.6 1551L647.4 1559.4" fill="none" stroke="#b9b9b9" stroke-width="2.6"/></svg>
<svg class="i" style="left:2990px;top:365px" width="280" height="140" viewBox="2990 365 280 140" ><ellipse cx="3135" cy="433.75" rx="130" ry="53.75" fill="none" stroke="#e94025" stroke-width="10"/></svg>
<span class="t" style="font-size:50px;top:84px;color:#303030;-webkit-text-stroke:1.0px #303030;left:466.23px;transform:scaleX(1.0335)">Overview</span>
<span class="t" style="font-size:24.3px;top:179px;color:#303030;-webkit-text-stroke:0.3px #303030;left:506.18px;transform:scaleX(1.0593)">Past Due (0)</span>
<span class="t" style="font-size:24.3px;top:179px;color:#303030;-webkit-text-stroke:0.3px #303030;left:1208.50px;transform:scaleX(1.1196)">$0.00</span>
<span class="t" style="font-size:24.3px;top:223px;color:#303030;-webkit-text-stroke:0.3px #303030;left:507.22px;transform:scaleX(1.0787)">Send but not due (6)</span>
<span class="t" style="font-size:24.3px;top:223px;color:#303030;-webkit-text-stroke:0.3px #303030;left:1141.80px;transform:scaleX(1.1083)">$43,242.00</span>
<span class="t" style="font-size:24.3px;top:267px;color:#303030;-webkit-text-stroke:0.3px #303030;left:506.11px;transform:scaleX(1.0953)">Draft (7)</span>
<span class="t" style="font-size:24.3px;top:267px;color:#303030;-webkit-text-stroke:0.3px #303030;left:1145.00px;transform:scaleX(1.0818)">$31,060.00</span>
<span class="t" style="font-size:50px;top:84px;color:#303030;-webkit-text-stroke:1.0px #303030;left:1461.28px;transform:scaleX(1.0555)">Issued</span>
<span class="t" style="font-size:28px;top:143px;color:#303030;-webkit-text-stroke:0.35px #303030;left:1462.37px;transform:scaleX(1.0656)">Past 30 days</span>
<span class="t" style="font-size:60px;top:215px;color:#303030;-webkit-text-stroke:1.8px #303030;left:1464.50px;transform:scaleX(1.0220)">$43,242.00</span>
<span class="t" style="font-size:22px;top:240px;color:#303030;-webkit-text-stroke:0.3px #303030;left:1786.33px;transform:scaleX(1.1726)">(6)</span>
<span class="t" style="font-size:50px;top:84px;color:#303030;-webkit-text-stroke:1.0px #303030;left:2458.30px;transform:scaleX(1.0412)">Average Invoice</span>
<span class="t" style="font-size:28px;top:143px;color:#303030;-webkit-text-stroke:0.35px #303030;left:2457.37px;transform:scaleX(1.0656)">Past 30 days</span>
<span class="t" style="font-size:60px;top:215px;color:#303030;-webkit-text-stroke:1.8px #303030;left:2459.50px;transform:scaleX(0.9643)">$12,383.67</span>
<span class="t" style="font-size:28px;top:402px;color:#1a1f2b;-webkit-text-stroke:0.5px #1a1f2b;left:442.68px;transform:scaleX(1.1205)">Status</span>
<span class="t" style="font-size:25px;top:463px;color:#8a8a8a;-webkit-text-stroke:0.3px #8a8a8a;left:465.75px;transform:scaleX(1.0495)">Change Status</span>
<span class="t" style="font-size:28px;top:402px;color:#1a1f2b;-webkit-text-stroke:0.5px #1a1f2b;left:1069.36px;transform:scaleX(1.0694)">Date</span>
<span class="t" style="font-size:21px;top:463px;color:#999;-webkit-text-stroke:0.3px #999;left:1092.20px;transform:scaleX(1.0591)">Select Date</span>
<span class="t" style="font-size:27.5px;top:431px;color:#fff;-webkit-text-stroke:0.7px #fff;left:3060.42px;transform:scaleX(1.0766)">Create Invoice</span>
<span class="t" style="font-size:24.5px;top:540px;color:#333;left:478.33px;transform:scaleX(1.0338)">Excel Export</span>
<span class="t" style="font-size:21.4px;top:539px;color:#999;-webkit-text-stroke:0.3px #999;left:2930.25px;transform:scaleX(1.0317)">Search</span>
<span class="t" style="font-size:23.2px;top:604px;color:#2a2a2a;-webkit-text-stroke:0.4px #2a2a2a;left:415.95px;transform:scaleX(1.0471)">Date</span>
<span class="t" style="font-size:23.2px;top:604px;color:#2a2a2a;-webkit-text-stroke:0.4px #2a2a2a;left:827.36px;transform:scaleX(1.0725)">Invoice #</span>
<span class="t" style="font-size:23.2px;top:604px;color:#2a2a2a;-webkit-text-stroke:0.4px #2a2a2a;left:1405.93px;transform:scaleX(1.0736)">Project</span>
<span class="t" style="font-size:23.2px;top:604px;color:#2a2a2a;-webkit-text-stroke:0.4px #2a2a2a;left:1901.75px;transform:scaleX(1.0611)">Total</span>
<span class="t" style="font-size:23.2px;top:604px;color:#2a2a2a;-webkit-text-stroke:0.4px #2a2a2a;left:2395.65px;transform:scaleX(1.0952)">Status</span>
<span class="t" style="font-size:23.2px;top:604px;color:#2a2a2a;-webkit-text-stroke:0.4px #2a2a2a;left:2770.25px;transform:scaleX(1.0818)">Action</span>
<span class="t" style="font-size:22px;top:660px;color:#1f1f1f;-webkit-text-stroke:0.3px #1f1f1f;left:416.42px;transform:scaleX(1.0783)">10/01/2025</span>
<span class="t" style="font-size:22px;top:660px;color:#2f6fed;-webkit-text-stroke:0.3px #2f6fed;left:829.31px;transform:scaleX(1.0909)">9</span>
<span class="t" style="font-size:22px;top:660px;color:#2f6fed;-webkit-text-stroke:0.3px #2f6fed;left:1408.25px;transform:scaleX(1.0079)">ArborNote Office</span>
<span class="t" style="font-size:22px;top:660px;color:#1f1f1f;-webkit-text-stroke:0.3px #1f1f1f;left:1903.00px;transform:scaleX(1.0779)">$600</span>
<span class="t" style="font-size:22px;top:661px;color:#1f1f1f;-webkit-text-stroke:0.3px #1f1f1f;left:2423.96px;transform:scaleX(1.0364)">Sent</span>
<span class="t" style="font-size:22px;top:714px;color:#1f1f1f;-webkit-text-stroke:0.3px #1f1f1f;left:416.40px;transform:scaleX(1.1050)">10/02/2025</span>
<span class="t" style="font-size:22px;top:714px;color:#2f6fed;-webkit-text-stroke:0.3px #2f6fed;left:829.54px;transform:scaleX(0.8608)">17</span>
<span class="t" style="font-size:22px;top:714px;color:#2f6fed;-webkit-text-stroke:0.3px #2f6fed;left:1408.25px;transform:scaleX(0.9908)">The Ranch</span>
<span class="t" style="font-size:22px;top:714px;color:#1f1f1f;-webkit-text-stroke:0.3px #1f1f1f;left:1903.00px;transform:scaleX(1.0090)">$14,500</span>
<span class="t" style="font-size:22px;top:715px;color:#1f1f1f;-webkit-text-stroke:0.3px #1f1f1f;left:2423.91px;transform:scaleX(1.0900)">Draft</span>
<span class="t" style="font-size:22px;top:768px;color:#1f1f1f;-webkit-text-stroke:0.3px #1f1f1f;left:416.40px;transform:scaleX(1.1050)">10/06/2025</span>
<span class="t" style="font-size:22px;top:768px;color:#2f6fed;-webkit-text-stroke:0.3px #2f6fed;left:829.35px;transform:scaleX(1.0458)">29</span>
<span class="t" style="font-size:22px;top:768px;color:#2f6fed;-webkit-text-stroke:0.3px #2f6fed;left:1406.17px;transform:scaleX(1.0395)">Irvine Community Center</span>
<span class="t" style="font-size:22px;top:768px;color:#1f1f1f;-webkit-text-stroke:0.3px #1f1f1f;left:1903.00px;transform:scaleX(0.9917)">$1,200</span>
<span class="t" style="font-size:22px;top:769px;color:#1f1f1f;-webkit-text-stroke:0.3px #1f1f1f;left:2423.91px;transform:scaleX(1.0900)">Draft</span>
<span class="t" style="font-size:22px;top:822px;color:#1f1f1f;-webkit-text-stroke:0.3px #1f1f1f;left:416.40px;transform:scaleX(1.1050)">10/06/2025</span>
<span class="t" style="font-size:22px;top:822px;color:#2f6fed;-webkit-text-stroke:0.3px #2f6fed;left:830.40px;transform:scaleX(1.0563)">30</span>
<span class="t" style="font-size:22px;top:822px;color:#2f6fed;-webkit-text-stroke:0.3px #2f6fed;left:1408.25px;transform:scaleX(0.9908)">The Ranch</span>
<span class="t" style="font-size:22px;top:822px;color:#1f1f1f;-webkit-text-stroke:0.3px #1f1f1f;left:1903.00px;transform:scaleX(1.0090)">$14,500</span>
<span class="t" style="font-size:22px;top:823px;color:#1f1f1f;-webkit-text-stroke:0.3px #1f1f1f;left:2423.96px;transform:scaleX(1.0364)">Sent</span>
<span class="t" style="font-size:22px;top:876px;color:#1f1f1f;-webkit-text-stroke:0.3px #1f1f1f;left:416.40px;transform:scaleX(1.1050)">10/06/2025</span>
<span class="t" style="font-size:22px;top:876px;color:#2f6fed;-webkit-text-stroke:0.3px #2f6fed;left:830.40px;transform:scaleX(0.8789)">31</span>
<span class="t" style="font-size:22px;top:876px;color:#2f6fed;-webkit-text-stroke:0.3px #2f6fed;left:1408.25px;transform:scaleX(1.0220)">Training Project</span>
<span class="t" style="font-size:22px;top:876px;color:#1f1f1f;-webkit-text-stroke:0.3px #1f1f1f;left:1903.00px;transform:scaleX(1.0779)">$300</span>
<span class="t" style="font-size:22px;top:877px;color:#1f1f1f;-webkit-text-stroke:0.3px #1f1f1f;left:2423.96px;transform:scaleX(1.0364)">Sent</span>
<span class="t" style="font-size:22px;top:930px;color:#1f1f1f;-webkit-text-stroke:0.3px #1f1f1f;left:416.42px;transform:scaleX(1.0802)">10/07/2025</span>
<span class="t" style="font-size:22px;top:930px;color:#2f6fed;-webkit-text-stroke:0.3px #2f6fed;left:830.40px;transform:scaleX(0.9738)">47</span>
<span class="t" style="font-size:22px;top:930px;color:#2f6fed;-webkit-text-stroke:0.3px #2f6fed;left:1407.22px;transform:scaleX(1.0327)">September Project</span>
<span class="t" style="font-size:22px;top:930px;color:#1f1f1f;-webkit-text-stroke:0.3px #1f1f1f;left:1903.00px;transform:scaleX(1.0316)">$0</span>
<span class="t" style="font-size:22px;top:931px;color:#1f1f1f;-webkit-text-stroke:0.3px #1f1f1f;left:2423.91px;transform:scaleX(1.0900)">Draft</span>
<span class="t" style="font-size:22px;top:984px;color:#1f1f1f;-webkit-text-stroke:0.3px #1f1f1f;left:416.42px;transform:scaleX(1.0802)">10/07/2025</span>
<span class="t" style="font-size:22px;top:984px;color:#2f6fed;-webkit-text-stroke:0.3px #2f6fed;left:830.40px;transform:scaleX(1.0563)">48</span>
<span class="t" style="font-size:22px;top:984px;color:#2f6fed;-webkit-text-stroke:0.3px #2f6fed;left:1408.25px;transform:scaleX(1.0220)">Training Project</span>
<span class="t" style="font-size:22px;top:984px;color:#1f1f1f;-webkit-text-stroke:0.3px #1f1f1f;left:1903.00px;transform:scaleX(1.0779)">$300</span>
<span class="t" style="font-size:22px;top:985px;color:#1f1f1f;-webkit-text-stroke:0.3px #1f1f1f;left:2423.91px;transform:scaleX(1.0900)">Draft</span>
<span class="t" style="font-size:22px;top:1038px;color:#1f1f1f;-webkit-text-stroke:0.3px #1f1f1f;left:416.42px;transform:scaleX(1.0802)">10/07/2025</span>
<span class="t" style="font-size:22px;top:1038px;color:#2f6fed;-webkit-text-stroke:0.3px #2f6fed;left:830.40px;transform:scaleX(1.0316)">49</span>
<span class="t" style="font-size:22px;top:1038px;color:#2f6fed;-webkit-text-stroke:0.3px #2f6fed;left:1407.27px;transform:scaleX(0.9761)">Office Test 1</span>
<span class="t" style="font-size:22px;top:1038px;color:#1f1f1f;-webkit-text-stroke:0.3px #1f1f1f;left:1903.00px;transform:scaleX(0.9097)">$1,100</span>
<span class="t" style="font-size:22px;top:1039px;color:#1f1f1f;-webkit-text-stroke:0.3px #1f1f1f;left:2423.96px;transform:scaleX(1.0364)">Sent</span>
<span class="t" style="font-size:22px;top:1092px;color:#1f1f1f;-webkit-text-stroke:0.3px #1f1f1f;left:416.42px;transform:scaleX(1.0802)">10/07/2025</span>
<span class="t" style="font-size:22px;top:1092px;color:#2f6fed;-webkit-text-stroke:0.3px #2f6fed;left:830.40px;transform:scaleX(1.0522)">50</span>
<span class="t" style="font-size:22px;top:1092px;color:#2f6fed;-webkit-text-stroke:0.3px #2f6fed;left:1407.22px;transform:scaleX(1.0327)">September Project</span>
<span class="t" style="font-size:22px;top:1092px;color:#1f1f1f;-webkit-text-stroke:0.3px #1f1f1f;left:1903.00px;transform:scaleX(1.0316)">$0</span>
<span class="t" style="font-size:22px;top:1093px;color:#1f1f1f;-webkit-text-stroke:0.3px #1f1f1f;left:2423.91px;transform:scaleX(1.0900)">Draft</span>
<span class="t" style="font-size:22px;top:1146px;color:#1f1f1f;-webkit-text-stroke:0.3px #1f1f1f;left:416.42px;transform:scaleX(1.0802)">10/07/2025</span>
<span class="t" style="font-size:22px;top:1146px;color:#2f6fed;-webkit-text-stroke:0.3px #2f6fed;left:830.40px;transform:scaleX(0.8748)">51</span>
<span class="t" style="font-size:22px;top:1146px;color:#2f6fed;-webkit-text-stroke:0.3px #2f6fed;left:1407.24px;transform:scaleX(1.0060)">Laguna Corp.</span>
<span class="t" style="font-size:22px;top:1146px;color:#1f1f1f;-webkit-text-stroke:0.3px #1f1f1f;left:1903.00px;transform:scaleX(0.9837)">$25,742</span>
<span class="t" style="font-size:22px;top:1147px;color:#1f1f1f;-webkit-text-stroke:0.3px #1f1f1f;left:2423.96px;transform:scaleX(1.0364)">Sent</span>
<span class="t" style="font-size:22px;top:1200px;color:#1f1f1f;-webkit-text-stroke:0.3px #1f1f1f;left:416.42px;transform:scaleX(1.0802)">10/07/2025</span>
<span class="t" style="font-size:22px;top:1200px;color:#2f6fed;-webkit-text-stroke:0.3px #2f6fed;left:830.40px;transform:scaleX(1.0150)">52</span>
<span class="t" style="font-size:22px;top:1200px;color:#2f6fed;-webkit-text-stroke:0.3px #2f6fed;left:1408.25px;transform:scaleX(0.9908)">The Ranch</span>
<span class="t" style="font-size:22px;top:1200px;color:#1f1f1f;-webkit-text-stroke:0.3px #1f1f1f;left:1903.00px">$15,000</span>
<span class="t" style="font-size:22px;top:1201px;color:#1f1f1f;-webkit-text-stroke:0.3px #1f1f1f;left:2423.91px;transform:scaleX(1.0900)">Draft</span>
<span class="t" style="font-size:22px;top:1254px;color:#1f1f1f;-webkit-text-stroke:0.3px #1f1f1f;left:416.42px;transform:scaleX(1.0802)">10/07/2025</span>
<span class="t" style="font-size:22px;top:1254px;color:#2f6fed;-webkit-text-stroke:0.3px #2f6fed;left:830.40px;transform:scaleX(1.0316)">53</span>
<span class="t" style="font-size:22px;top:1254px;color:#2f6fed;-webkit-text-stroke:0.3px #2f6fed;left:1407.24px;transform:scaleX(1.0140)">Cognetive Office</span>
<span class="t" style="font-size:22px;top:1254px;color:#1f1f1f;-webkit-text-stroke:0.3px #1f1f1f;left:1903.00px;transform:scaleX(0.9955)">$1,000</span>
<span class="t" style="font-size:22px;top:1255px;color:#1f1f1f;-webkit-text-stroke:0.3px #1f1f1f;left:2423.96px;transform:scaleX(1.0364)">Sent</span>
<span class="t" style="font-size:22px;top:1308px;color:#1f1f1f;-webkit-text-stroke:0.3px #1f1f1f;left:416.42px;transform:scaleX(1.0802)">10/07/2025</span>
<span class="t" style="font-size:22px;top:1308px;color:#2f6fed;-webkit-text-stroke:0.3px #2f6fed;left:830.40px;transform:scaleX(1.0522)">54</span>
<span class="t" style="font-size:22px;top:1308px;color:#2f6fed;-webkit-text-stroke:0.3px #2f6fed;left:1408.25px;transform:scaleX(1.0377)">John Henderson</span>
<span class="t" style="font-size:22px;top:1308px;color:#1f1f1f;-webkit-text-stroke:0.3px #1f1f1f;left:1903.00px;transform:scaleX(1.0419)">$60</span>
<span class="t" style="font-size:22px;top:1309px;color:#1f1f1f;-webkit-text-stroke:0.3px #1f1f1f;left:2423.91px;transform:scaleX(1.0900)">Draft</span>
<span class="t" style="font-size:22px;top:1541px;color:#2a2a2a;-webkit-text-stroke:0.3px #2a2a2a;left:3085.55px;transform:scaleX(0.9492)">1 of 1 pages (13 items)</span>
</div>
<div id="side">
<svg class="i" style="left:0px;top:0px" width="375" height="80" viewBox="0 0 375 80" ><path fill-rule="evenodd" fill="#fff" d="M12.849999999999998 37.25A19.05 19.05 0 1 0 50.95 37.25A19.05 19.05 0 1 0 12.849999999999998 37.25ZM21.75 37.25A10.15 10.5 0 1 1 42.05 37.25A10.15 10.5 0 1 1 21.75 37.25Z"/><rect x="41.3" y="18.3" width="9.4" height="37.1" fill="#fff"/><path d="M57.45 55.4V18.3H67.15L66.05 22.9C68.05 19.6 71.45 18 76.95 18.6L73.35000000000001 26.9C69.45 26.2 66.8 29 66.8 34.4V55.4Z" fill="#fff"/><rect x="81.15" y="5" width="9.6" height="50.4" fill="#fff"/><path fill-rule="evenodd" fill="#fff" d="M81.15 37.25A19.05 19.05 0 1 0 119.25 37.25A19.05 19.05 0 1 0 81.15 37.25ZM90.05 37.25A10.15 10.5 0 1 1 110.35000000000001 37.25A10.15 10.5 0 1 1 90.05 37.25Z"/><path fill-rule="evenodd" fill="#fff" d="M124.55 37.25A19.05 19.05 0 1 0 162.65 37.25A19.05 19.05 0 1 0 124.55 37.25ZM133.45 37.25A10.15 10.5 0 1 1 153.75 37.25A10.15 10.5 0 1 1 133.45 37.25Z"/><path d="M167.6 55.4V18.3H177.29999999999998L176.2 22.9C178.2 19.6 181.6 18 187.1 18.6L183.5 26.9C179.6 26.2 176.95 29 176.95 34.4V55.4Z" fill="#fff"/><path d="M193.8 55.4V18.6M193.8 33.6C193.8 24.6 199.6 20.5 207.5 20.5C215.4 20.5 221.2 24.6 221.2 33.6V55.4" fill="none" stroke="#fff" stroke-width="4.7"/><path fill-rule="evenodd" fill="#62b65c" d="M227.8 37.25A19.2 19.2 0 1 0 266.2 37.25A19.2 19.2 0 1 0 227.8 37.25ZM236.8 37.25A10.2 10.3 0 1 1 257.2 37.25A10.2 10.3 0 1 1 236.8 37.25Z"/><path d="M235.6 57C242 60.5 252 60.5 258.4 57L247.2 68.2Z" fill="#62b65c"/><path d="M277.55 5.9V55.4" fill="none" stroke="#fff" stroke-width="5.2"/><path d="M268.7 21H287.3" fill="none" stroke="#fff" stroke-width="4.7"/><path d="M294.6 33.6H328C326.8 25.6 320.2 20.4 311.4 20.4C301.6 20.4 294.4 27.6 294.4 37.2C294.4 46.8 301.6 54 311.4 54C318.6 54 324.4 50.4 327.2 44.2" fill="none" stroke="#fff" stroke-width="4.7"/></svg>
<div class="active"></div>
<svg class="i" style="left:322px;top:362.3px" width="20" height="24" viewBox="322 362.3 20 24" ><path d="M327.3 367.0L335.3 374.3L327.3 381.6" fill="none" stroke="#8394a5" stroke-width="4.4"/></svg>
<svg class="i" style="left:322px;top:439.4px" width="20" height="24" viewBox="322 439.4 20 24" ><path d="M327.3 444.09999999999997L335.3 451.4L327.3 458.7" fill="none" stroke="#8394a5" stroke-width="4.4"/></svg>
<svg class="i" style="left:322px;top:516.6px" width="20" height="24" viewBox="322 516.6 20 24" ><path d="M327.3 521.3000000000001L335.3 528.6L327.3 535.9" fill="none" stroke="#8394a5" stroke-width="4.4"/></svg>
<svg class="i" style="left:3px;top:126px" width="34" height="31" viewBox="3 126 34 31" ><path d="M11.8 153.2A13.4 13.4 0 1 1 28.2 153.2Z" fill="none" stroke="#5ab756" stroke-width="2" stroke-linecap="round" stroke-linejoin="round"/><path d="M20 142.8L27.4 135.7" fill="none" stroke="#5ab756" stroke-width="2.4" stroke-linecap="round" stroke-linejoin="round"/><circle cx="19.9" cy="142.9" r="2.3" fill="#5ab756"/></svg>
<svg class="i" style="left:3px;top:203px" width="34" height="32" viewBox="3 203 34 32" ><circle cx="19.9" cy="211.7" r="5.3" fill="none" stroke="#5ab756" stroke-width="2" stroke-linecap="round" stroke-linejoin="round"/><path d="M7.2 231.6C7.2 215.6 32.8 215.6 32.8 231.6Z" fill="none" stroke="#5ab756" stroke-width="2" stroke-linecap="round" stroke-linejoin="round"/></svg>
<svg class="i" style="left:2px;top:281px" width="36" height="32" viewBox="2 281 36 32" ><circle cx="19.9" cy="287.2" r="3.5" fill="none" stroke="#5ab756" stroke-width="2" stroke-linecap="round" stroke-linejoin="round"/><circle cx="8.9" cy="306.3" r="3.5" fill="none" stroke="#5ab756" stroke-width="2" stroke-linecap="round" stroke-linejoin="round"/><circle cx="30.8" cy="306.3" r="3.5" fill="none" stroke="#5ab756" stroke-width="2" stroke-linecap="round" stroke-linejoin="round"/><path d="M19.9 290.8V300.1L12 304.4M19.9 300.1L27.8 304.4" fill="none" stroke="#5ab756" stroke-width="2" stroke-linecap="round" stroke-linejoin="round"/></svg>
<svg class="i" style="left:3px;top:358px" width="34" height="33" viewBox="3 358 34 33" ><rect x="6.9" y="362.9" width="26.4" height="24.6" rx="3" fill="none" stroke="#5ab756" stroke-width="2" stroke-linecap="round" stroke-linejoin="round"/><path d="M6.9 368.9H33.3M11.7 360V362.9M28 360V362.9M15.6 377.2L19 379.9L24.9 374.4" fill="none" stroke="#5ab756" stroke-width="2" stroke-linecap="round" stroke-linejoin="round"/></svg>
<svg class="i" style="left:3px;top:434px" width="34" height="34" viewBox="3 434 34 34" ><path d="M6.6 436.6V464.3H34.2M10.8 457.4L18.4 446.9L23.3 453.4L32 442.9" fill="none" stroke="#5ab756" stroke-width="2" stroke-linecap="butt" stroke-linejoin="miter"/></svg>
<svg class="i" style="left:3px;top:511px" width="34" height="35" viewBox="3 511 34 35" ><path d="M12.3 515.6C13.2 514.2 15 514 15.8 514.1C19.5 514.8 23 518.2 23 521.6C23 523.2 22.4 524.2 22.4 525.2C22.5 526 23.2 526.4 23.9 527L33.3 536.8C35 538.6 34.8 541 33.2 542.5C31.6 544 29 543.9 27.4 542.3L17.2 531.2C16.6 530.5 16 530.3 15.2 530.6C13.8 531.3 12 531.4 10.6 530.6C7.4 529.2 5.2 526.4 5.3 522.8C5.3 521.6 5.6 520.4 6.4 519.8C7 519.4 7.6 519.6 8 520.2L11 524.6C11.6 525.6 12.6 525.9 13.6 525.4C15.6 524.6 17.6 522.8 17.4 520.8C17.2 519.6 16.6 519.2 16 518.6L12.6 516.9C12 516.5 12 516 12.3 515.6Z" fill="none" stroke="#5ab756" stroke-width="1.8" stroke-linecap="round" stroke-linejoin="round"/></svg>
<svg class="i" style="left:3px;top:588px" width="34" height="36" viewBox="3 588 34 36" ><path d="M17.7 595.3H6.8V619.4H28.8V608.8" fill="none" stroke="#e2f0e2" stroke-width="1.7" stroke-linecap="butt" stroke-linejoin="miter"/><path d="M14.4 611.3C14.8 603.8 19.6 596.6 27 595.8V591.8L34.3 598.8L27.8 606V601.8C21.4 602.2 17.4 605.6 14.4 611.3Z" fill="none" stroke="#e2f0e2" stroke-width="1.3" stroke-linecap="butt" stroke-linejoin="round"/></svg>
<svg class="i" style="left:3px;top:667px" width="34" height="33" viewBox="3 667 34 33" ><circle cx="19.9" cy="683.4" r="13" fill="none" stroke="#5ab756" stroke-width="2" stroke-linecap="round" stroke-linejoin="round"/><path d="M19.9 670.4V683.4H32.9M19.9 683.4L10.6 692.6" fill="none" stroke="#5ab756" stroke-width="2" stroke-linecap="round" stroke-linejoin="round"/></svg>
<svg class="i" style="left:5px;top:930px" width="36" height="33" viewBox="5 930 36 33" ><path d="M9 939.3H14.5C21 939.3 23 953.6 29.5 953.6H33M9 953.6H14.5C17.2 953.6 19 951 20.4 948.2M23.6 944.7C25 941.9 26.8 939.3 29.5 939.3H33" fill="none" stroke="#5ab756" stroke-width="4.4" stroke-linecap="round"/><path d="M31.6 933.6L38 939.3L31.6 945ZM31.6 947.9L38 953.6L31.6 959.3Z" fill="#5ab756" stroke="#5ab756" stroke-width="1.6" stroke-linejoin="round"/></svg>
<svg class="i" style="left:3px;top:1007px" width="34" height="34" viewBox="3 1007 34 34" ><path d="M19.90 1010.70 L20.42 1010.72 L20.93 1010.79 L21.43 1010.97 L21.87 1011.47 L22.17 1012.47 L22.40 1013.49 L22.69 1014.00 L23.04 1014.25 L23.40 1014.42 L23.77 1014.57 L24.13 1014.72 L24.51 1014.86 L24.92 1014.93 L25.50 1014.77 L26.37 1014.21 L27.30 1013.71 L27.96 1013.68 L28.44 1013.90 L28.85 1014.21 L29.23 1014.57 L29.59 1014.95 L29.90 1015.36 L30.12 1015.84 L30.09 1016.50 L29.59 1017.43 L29.03 1018.30 L28.87 1018.88 L28.94 1019.29 L29.08 1019.67 L29.23 1020.03 L29.38 1020.40 L29.55 1020.76 L29.80 1021.11 L30.31 1021.40 L31.33 1021.63 L32.33 1021.93 L32.83 1022.37 L33.01 1022.87 L33.08 1023.38 L33.10 1023.90 L33.08 1024.42 L33.01 1024.93 L32.83 1025.43 L32.33 1025.87 L31.33 1026.17 L30.31 1026.40 L29.80 1026.69 L29.55 1027.04 L29.38 1027.40 L29.23 1027.77 L29.08 1028.13 L28.94 1028.51 L28.87 1028.92 L29.03 1029.50 L29.59 1030.37 L30.09 1031.30 L30.12 1031.96 L29.90 1032.44 L29.59 1032.85 L29.23 1033.23 L28.85 1033.59 L28.44 1033.90 L27.96 1034.12 L27.30 1034.09 L26.37 1033.59 L25.50 1033.03 L24.92 1032.87 L24.51 1032.94 L24.13 1033.08 L23.77 1033.23 L23.40 1033.38 L23.04 1033.55 L22.69 1033.80 L22.40 1034.31 L22.17 1035.33 L21.87 1036.33 L21.43 1036.83 L20.93 1037.01 L20.42 1037.08 L19.90 1037.10 L19.38 1037.08 L18.87 1037.01 L18.37 1036.83 L17.93 1036.33 L17.63 1035.33 L17.40 1034.31 L17.11 1033.80 L16.76 1033.55 L16.40 1033.38 L16.03 1033.23 L15.67 1033.08 L15.29 1032.94 L14.88 1032.87 L14.30 1033.03 L13.43 1033.59 L12.50 1034.09 L11.84 1034.12 L11.36 1033.90 L10.95 1033.59 L10.57 1033.23 L10.21 1032.85 L9.90 1032.44 L9.68 1031.96 L9.71 1031.30 L10.21 1030.37 L10.77 1029.50 L10.93 1028.92 L10.86 1028.51 L10.72 1028.13 L10.57 1027.77 L10.42 1027.40 L10.25 1027.04 L10.00 1026.69 L9.49 1026.40 L8.47 1026.17 L7.47 1025.87 L6.97 1025.43 L6.79 1024.93 L6.72 1024.42 L6.70 1023.90 L6.72 1023.38 L6.79 1022.87 L6.97 1022.37 L7.47 1021.93 L8.47 1021.63 L9.49 1021.40 L10.00 1021.11 L10.25 1020.76 L10.42 1020.40 L10.57 1020.03 L10.72 1019.67 L10.86 1019.29 L10.93 1018.88 L10.77 1018.30 L10.21 1017.43 L9.71 1016.50 L9.68 1015.84 L9.90 1015.36 L10.21 1014.95 L10.57 1014.57 L10.95 1014.21 L11.36 1013.90 L11.84 1013.68 L12.50 1013.71 L13.43 1014.21 L14.30 1014.77 L14.88 1014.93 L15.29 1014.86 L15.67 1014.72 L16.03 1014.57 L16.40 1014.42 L16.76 1014.25 L17.11 1014.00 L17.40 1013.49 L17.63 1012.47 L17.93 1011.47 L18.37 1010.97 L18.87 1010.79 L19.38 1010.72 Z" fill="none" stroke="#5ab756" stroke-width="1.7" stroke-linecap="round" stroke-linejoin="round"/><circle cx="19.9" cy="1023.9" r="4.8" fill="none" stroke="#5ab756" stroke-width="1.8" stroke-linecap="round" stroke-linejoin="round"/></svg>
<svg class="i" style="left:3px;top:1085px" width="34" height="33" viewBox="3 1085 34 33" ><circle cx="19.9" cy="1101.2" r="13" fill="none" stroke="#5ab756" stroke-width="2" stroke-linecap="round" stroke-linejoin="round"/><path d="M15.6 1097.4C15.6 1092.4 24.3 1092.4 24.3 1097.2C24.3 1100.4 19.8 1100.2 19.8 1103.4" fill="none" stroke="#5ab756" stroke-width="2.5" stroke-linecap="round" stroke-linejoin="round"/><circle cx="19.8" cy="1107.7" r="1.6" fill="#5ab756"/></svg>
<svg class="i" style="left:3px;top:1162px" width="34" height="33" viewBox="3 1162 34 33" ><path d="M31.68 1172.61A13 13 0 1 0 31.68 1183.59" fill="none" stroke="#5ab756" stroke-width="2" stroke-linecap="round" stroke-linejoin="round"/><path d="M14.6 1178.1H28.4M23.4 1172.6999999999998L28.6 1178.1L23.4 1183.5" fill="none" stroke="#5ab756" stroke-width="2" stroke-linecap="round" stroke-linejoin="round"/></svg>
<div class="cobox"></div>
<svg class="i" style="left:140px;top:808px" width="60" height="66" viewBox="140 808 60 66" ><path d="M-4.80 0Q0 -4.60 4.80 0Q0 4.60 -4.80 0Z" fill="#1f6b35" transform="translate(152.26 850.26) rotate(-208)"/><path d="M-4.80 0Q0 -4.60 4.80 0Q0 4.60 -4.80 0Z" fill="#8cc63f" transform="translate(150.20 844.00) rotate(-188)"/><path d="M-4.80 0Q0 -4.60 4.80 0Q0 4.60 -4.80 0Z" fill="#1f6b35" transform="translate(150.38 837.41) rotate(-169)"/><path d="M-4.80 0Q0 -4.60 4.80 0Q0 4.60 -4.80 0Z" fill="#8cc63f" transform="translate(152.76 831.26) rotate(-149)"/><path d="M-4.80 0Q0 -4.60 4.80 0Q0 4.60 -4.80 0Z" fill="#1f6b35" transform="translate(157.07 826.27) rotate(-129)"/><path d="M-4.80 0Q0 -4.60 4.80 0Q0 4.60 -4.80 0Z" fill="#8cc63f" transform="translate(162.80 823.03) rotate(-110)"/><path d="M-4.80 0Q0 -4.60 4.80 0Q0 4.60 -4.80 0Z" fill="#1f6b35" transform="translate(169.30 821.90) rotate(-90)"/><path d="M-4.80 0Q0 -4.60 4.80 0Q0 4.60 -4.80 0Z" fill="#8cc63f" transform="translate(175.80 823.03) rotate(-70)"/><path d="M-4.80 0Q0 -4.60 4.80 0Q0 4.60 -4.80 0Z" fill="#1f6b35" transform="translate(181.53 826.27) rotate(-51)"/><path d="M-4.80 0Q0 -4.60 4.80 0Q0 4.60 -4.80 0Z" fill="#8cc63f" transform="translate(185.84 831.26) rotate(-31)"/><path d="M-4.80 0Q0 -4.60 4.80 0Q0 4.60 -4.80 0Z" fill="#1f6b35" transform="translate(188.22 837.41) rotate(-11)"/><path d="M-4.80 0Q0 -4.60 4.80 0Q0 4.60 -4.80 0Z" fill="#8cc63f" transform="translate(188.40 844.00) rotate(8)"/><path d="M-4.80 0Q0 -4.60 4.80 0Q0 4.60 -4.80 0Z" fill="#1f6b35" transform="translate(186.34 850.26) rotate(28)"/><path d="M-3.70 0Q0 -3.80 3.70 0Q0 3.80 -3.70 0Z" fill="#8cc63f" transform="translate(157.46 845.51) rotate(-200)"/><path d="M-3.70 0Q0 -3.80 3.70 0Q0 3.80 -3.70 0Z" fill="#1f6b35" transform="translate(156.74 840.22) rotate(-176)"/><path d="M-3.70 0Q0 -3.80 3.70 0Q0 3.80 -3.70 0Z" fill="#8cc63f" transform="translate(158.27 835.11) rotate(-151)"/><path d="M-3.70 0Q0 -3.80 3.70 0Q0 3.80 -3.70 0Z" fill="#1f6b35" transform="translate(161.78 831.09) rotate(-127)"/><path d="M-3.70 0Q0 -3.80 3.70 0Q0 3.80 -3.70 0Z" fill="#8cc63f" transform="translate(166.63 828.89) rotate(-102)"/><path d="M-3.70 0Q0 -3.80 3.70 0Q0 3.80 -3.70 0Z" fill="#1f6b35" transform="translate(171.97 828.89) rotate(-78)"/><path d="M-3.70 0Q0 -3.80 3.70 0Q0 3.80 -3.70 0Z" fill="#8cc63f" transform="translate(176.82 831.09) rotate(-53)"/><path d="M-3.70 0Q0 -3.80 3.70 0Q0 3.80 -3.70 0Z" fill="#1f6b35" transform="translate(180.33 835.11) rotate(-29)"/><path d="M-3.70 0Q0 -3.80 3.70 0Q0 3.80 -3.70 0Z" fill="#8cc63f" transform="translate(181.86 840.22) rotate(-4)"/><path d="M-3.70 0Q0 -3.80 3.70 0Q0 3.80 -3.70 0Z" fill="#1f6b35" transform="translate(181.14 845.51) rotate(20)"/><path d="M-2.90 0Q0 -3.20 2.90 0Q0 3.20 -2.90 0Z" fill="#1f6b35" transform="translate(162.92 840.64) rotate(-175)"/><path d="M-2.90 0Q0 -3.20 2.90 0Q0 3.20 -2.90 0Z" fill="#2f8a3c" transform="translate(164.33 837.17) rotate(-141)"/><path d="M-2.90 0Q0 -3.20 2.90 0Q0 3.20 -2.90 0Z" fill="#1f6b35" transform="translate(167.43 835.08) rotate(-107)"/><path d="M-2.90 0Q0 -3.20 2.90 0Q0 3.20 -2.90 0Z" fill="#2f8a3c" transform="translate(171.17 835.08) rotate(-73)"/><path d="M-2.90 0Q0 -3.20 2.90 0Q0 3.20 -2.90 0Z" fill="#1f6b35" transform="translate(174.27 837.17) rotate(-39)"/><path d="M-2.90 0Q0 -3.20 2.90 0Q0 3.20 -2.90 0Z" fill="#2f8a3c" transform="translate(175.68 840.64) rotate(-5)"/><path d="M168.6 866C169 858 168.6 853 166.6 849L160 843M168.8 855L176.4 846M167.8 851L169.6 840M164.2 847L162.4 840" fill="none" stroke="#3b9a46" stroke-width="1.5" stroke-linecap="round"/><path d="M166.6 866.8C167.8 860 167.8 855 167 850.5L170.4 851C170 856 170.2 861 171.4 866.8Z" fill="#3b9a46"/><path d="M156.3 867.6C163 863.6 171 865.4 176 866.8C180 867.9 184 868 186.8 867.4C183 869.4 178 869.2 173 868C167 866.6 161 866.4 156.3 867.6Z" fill="#6fb544"/></svg>
<div class="sdiv"></div>
<svg class="i" style="left:316px;top:1308px" width="38" height="37" viewBox="316 1308 38 37" ><rect x="320.1" y="1312.4" width="28.8" height="27.8" rx="4.5" fill="none" stroke="#98a5b2" stroke-width="2"/><path d="M329.8 1312.4V1340.2" stroke="#98a5b2" stroke-width="2"/><circle cx="325" cy="1319.6" r="1.5" fill="#98a5b2"/><circle cx="325" cy="1326.3" r="1.5" fill="#98a5b2"/><circle cx="325" cy="1333.1" r="1.5" fill="#98a5b2"/></svg>
<svg class="i" style="left:0px;top:540px" width="240" height="120" viewBox="0 540 240 120" ><ellipse cx="94" cy="600.6" rx="116.4" ry="41.4" fill="none" stroke="#e94025" stroke-width="10.5"/></svg>
<span class="t nav" style="font-size:25.2px;top:129px;color:#fff;-webkit-text-stroke:0.55px #fff;left:49.32px;transform:scaleX(1.0382)">Dashboard</span>
<span class="t nav" style="font-size:25.2px;top:207px;color:#fff;-webkit-text-stroke:0.55px #fff;left:52.74px;transform:scaleX(1.0571)">Clients</span>
<span class="t nav" style="font-size:25.2px;top:284px;color:#fff;-webkit-text-stroke:0.55px #fff;left:51.63px;transform:scaleX(1.0827)">Projects</span>
<span class="t nav" style="font-size:25.2px;top:362px;color:#fff;-webkit-text-stroke:0.55px #fff;left:53.80px;transform:scaleX(1.0768)">Appointments</span>
<span class="t nav" style="font-size:25.2px;top:439px;color:#fff;-webkit-text-stroke:0.55px #fff;left:52.80px">Sales</span>
<span class="t nav" style="font-size:25.2px;top:516px;color:#fff;-webkit-text-stroke:0.55px #fff;left:53.80px;transform:scaleX(0.9824)">Work Orders</span>
<span class="t nav" style="font-size:25.2px;top:594px;color:#fff;-webkit-text-stroke:0.55px #fff;left:51.68px;transform:scaleX(1.0601)">Invoices</span>
<span class="t nav" style="font-size:25.2px;top:671px;color:#fff;-webkit-text-stroke:0.55px #fff;left:51.68px;transform:scaleX(1.0584)">Reports</span>
<span class="t nav" style="font-size:25.2px;top:934px;color:#fff;-webkit-text-stroke:0.55px #fff;left:51.75px;transform:scaleX(1.0243)">Michele&#x27;s Tree Service -</span>
<span class="t nav" style="font-size:25.2px;top:1011px;color:#fff;-webkit-text-stroke:0.55px #fff;left:52.71px;transform:scaleX(1.0871)">Settings</span>
<span class="t nav" style="font-size:25.2px;top:1089px;color:#fff;-webkit-text-stroke:0.55px #fff;left:52.73px;transform:scaleX(1.0709)">Support</span>
<span class="t nav" style="font-size:25.2px;top:1166px;color:#fff;-webkit-text-stroke:0.55px #fff;left:51.62px;transform:scaleX(1.0887)">Logout</span>
<span class="t" style="font-size:22px;top:1273px;color:#b9c2cb;-webkit-text-stroke:1.0px #b9c2cb;left:-0.50px;transform:scaleX(0.8873)">v 1.134.4</span>
</div>
</body></html>
